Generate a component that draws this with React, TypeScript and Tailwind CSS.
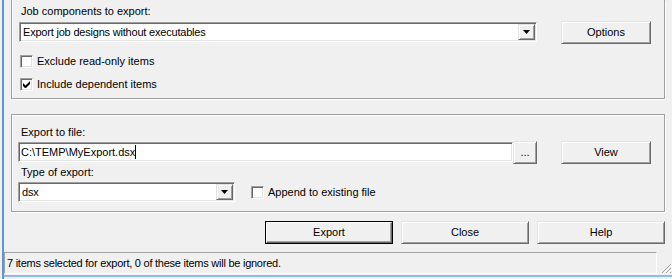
import React from "react";

function Btn({ label, width, isDefault }: { label: string; width: string; isDefault?: boolean }) {
  if (isDefault) {
    return (
      <div className={`${width} h-[23px] border border-black flex`}>
        <div className="flex-1 flex items-center justify-center bg-[#f0f0f0] border border-t-white border-l-white border-r-[#696969] border-b-[#696969] shadow-[inset_-1px_-1px_0_#a0a0a0]">
          {label}
        </div>
      </div>
    );
  }
  return (
    <div
      className={`${width} h-[23px] flex items-center justify-center bg-[#f0f0f0] border border-t-[#e3e3e3] border-l-[#e3e3e3] border-r-[#696969] border-b-[#696969] shadow-[inset_1px_1px_0_#fff,inset_-1px_-1px_0_#a0a0a0]`}
    >
      {label}
    </div>
  );
}

function ArrowBtn() {
  return (
    <div className="w-[17px] h-[16px] flex items-center justify-center bg-[#f0f0f0] border border-t-[#e3e3e3] border-l-[#e3e3e3] border-r-[#696969] border-b-[#696969] shadow-[inset_1px_1px_0_#fff,inset_-1px_-1px_0_#a0a0a0]">
      <svg width="7" height="4" viewBox="0 0 7 4">
        <path d="M0 0H7L3.5 4Z" fill="#000" />
      </svg>
    </div>
  );
}

function Combo({ value, width }: { value: string; width: string }) {
  return (
    <div className={`${width} h-[20px] flex items-center bg-white border border-t-[#a0a0a0] border-l-[#a0a0a0] border-r-white border-b-white shadow-[inset_1px_1px_0_#696969,inset_-1px_-1px_0_#e3e3e3]`}>
      <span className="flex-1 pl-[3px] leading-[13px] tracking-[-0.2px]">{value}</span>
      <div className="pr-[1px]">
        <ArrowBtn />
      </div>
    </div>
  );
}

function Check({ checked, label }: { checked?: boolean; label: string }) {
  return (
    <div className="flex items-center h-[13px]">
      <div className="w-[13px] h-[13px] bg-white border border-t-[#a0a0a0] border-l-[#a0a0a0] border-r-white border-b-white shadow-[inset_1px_1px_0_#696969,inset_-1px_-1px_0_#e3e3e3] flex items-center justify-center">
        {checked && (
          <svg width="7" height="7" viewBox="0 0 7 7">
            <path d="M0 2v3l2 2h1l4-4V0L2.5 4.5Z" fill="#000" />
          </svg>
        )}
      </div>
      <span className="ml-[4px] leading-[13px]">{label}</span>
    </div>
  );
}

export default function App() {
  return (
    <div className="w-[672px] h-[279px] overflow-hidden flex bg-[#f0f0f0] text-[11px] text-black font-['Liberation_Sans',Arial,sans-serif]">
      <div className="w-[2px] bg-[#f0f0f0]" />
      <div className="w-[2px] bg-[#5b97d3]" />
      <div className="flex-1 flex flex-col">
        {/* job components group */}
        <div className="ml-[7px] w-[654px] h-[99px] border-x border-b border-[#a0a0a0] shadow-[inset_1px_0_0_#fff,1px_1px_0_#fff] pt-[5px]">
          <div className="ml-[9px] h-[13px] leading-[13px]">Job components to export:</div>
          <div className="mt-[3px] ml-[7px] h-[22px] flex items-center">
            <Combo value="Export job designs without executables" width="w-[518px]" />
            <div className="ml-[24px]">
              <Btn label="Options" width="w-[90px]" />
            </div>
          </div>
          <div className="mt-[12px] ml-[8px]">
            <Check label="Exclude read-only items" />
          </div>
          <div className="mt-[10px] ml-[8px]">
            <Check checked label="Include dependent items" />
          </div>
        </div>

        {/* export file group */}
        <div className="mt-[15px] ml-[7px] w-[654px] h-[98px] border border-[#a0a0a0] shadow-[inset_1px_1px_0_#fff,1px_1px_0_#fff] pt-[11px]">
          <div className="ml-[9px] h-[13px] leading-[13px]">Export to file:</div>
          <div className="mt-[2px] ml-[6px] h-[22px] flex items-center">
            <div className="w-[495px] h-[20px] flex items-center bg-white border border-t-[#a0a0a0] border-l-[#a0a0a0] border-r-white border-b-white shadow-[inset_1px_1px_0_#696969,inset_-1px_-1px_0_#e3e3e3]">
              <span className="pl-[2px] leading-[13px]">C:\TEMP\MyExport.dsx</span>
              <span className="w-[1px] h-[14px] bg-black" />
            </div>
            <Btn label="..." width="w-[24px]" />
            <div className="ml-[24px]">
              <Btn label="View" width="w-[90px]" />
            </div>
          </div>
          <div className="mt-[3px] ml-[9px] h-[13px] leading-[13px]">Type of export:</div>
          <div className="mt-[3px] ml-[6px] flex items-center">
            <Combo value="dsx" width="w-[217px]" />
            <div className="ml-[16px]">
              <Check label="Append to existing file" />
            </div>
          </div>
        </div>

        {/* action buttons */}
        <div className="mt-[9px] ml-[261px] flex gap-[8px]">
          <Btn label="Export" width="w-[128px]" isDefault />
          <Btn label="Close" width="w-[128px]" />
          <Btn label="Help" width="w-[128px]" />
        </div>

        {/* status bar */}
        <div className="mt-[8px] h-[22px] flex items-end">
          <div className="w-[653px] h-[22px] flex items-center border border-t-[#a0a0a0] border-l-[#a0a0a0] border-r-white border-b-white pl-[2px] tracking-[-0.25px]">
            7 items selected for export, 0 of these items will be ignored.
          </div>
          <svg className="ml-[3px]" width="12" height="12" viewBox="0 0 12 12">
            <path d="M11 2L2 11M11 6L6 11M11 10L10 11" stroke="#a0a0a0" strokeWidth="1" />
            <path d="M12 3L3 12M12 7L7 12" stroke="#fff" strokeWidth="1" />
          </svg>
        </div>
        <div className="mt-[1px] h-[2px] bg-[#8fbbe6]" />
      </div>
    </div>
  );
}
